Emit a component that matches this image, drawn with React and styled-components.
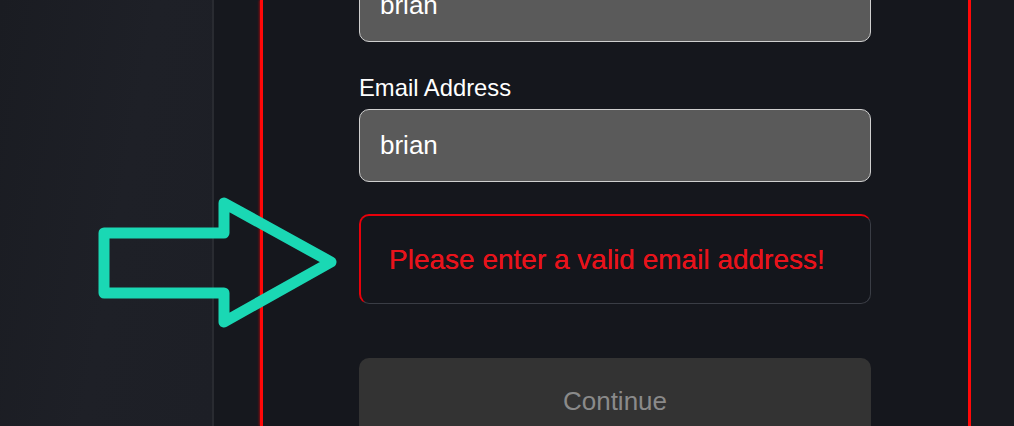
import React from "react";
import styled, { createGlobalStyle } from "styled-components";

const Global = createGlobalStyle`
  html, body { margin: 0; padding: 0; background: #16181e; overflow: hidden; }
  body { font-family: "Liberation Sans", Arial, sans-serif; }
  #root { height: 426px; }
`;

const Page = styled.div`
  position: relative;
  display: flex;
  height: 426px;
  width: 1014px;
  overflow: hidden;
  background: #16181e;
`;

const Sidebar = styled.aside`
  flex: 0 0 212px;
  border-right: 2px solid #292b31;
  background: linear-gradient(100deg, #1a1c22 0%, #1e2027 55%, #1d1f26 100%);
`;

const Gutter = styled.div`
  flex: 0 0 46px;
  background: #16181e;
`;

const Card = styled.section`
  flex: 0 0 711px;
  border-left: 3px solid #ff0808;
  border-right: 3px solid #ff0808;
  background: #15171d;
  padding: 0 97px 0 96px;
  box-sizing: border-box;
  box-shadow: -1px 0 2px rgba(255, 0, 0, 0.45), 1px 0 2px rgba(255, 0, 0, 0.45);
`;

const Rest = styled.div`
  flex: 1;
  background: #181a20;
`;

const Form = styled.form`
  display: flex;
  flex-direction: column;
  margin-top: -31px;
  width: 512px;
`;

const Field = styled.div`
  display: flex;
  align-items: center;
  box-sizing: border-box;
  height: 73px;
  padding: 0 20px;
  background: #5a5a5a;
  border: 1.5px solid #cfcfcf;
  border-radius: 10px;
  color: #ffffff;
  font-size: 26px;
  margin-bottom: ${(p) => p.$mb || 0}px;
`;

const Label = styled.label`
  color: #ffffff;
  font-size: 23.8px;
  line-height: 27px;
  margin-bottom: 8px;
`;

const ErrorBox = styled.div`
  display: flex;
  align-items: center;
  box-sizing: border-box;
  height: 90px;
  margin-top: 32px;
  padding: 0 20px 0 28px;
  border: 1.5px solid #3a3d45;
  border-top: 2px solid #e8000a;
  border-left: 2px solid #e8000a;
  border-radius: 10px;
  background: #14161c;
  color: #e8131b;
  font-size: 28px;
  text-shadow: 0 0 0.6px #e8131b;
`;

const Button = styled.button`
  margin-top: 54px;
  height: 86px;
  border: none;
  border-radius: 10px;
  background: #333333;
  color: #8a8a8a;
  font-family: "Liberation Sans", Arial, sans-serif;
  font-size: 26px;
  padding: 0;
`;

const ArrowMark = styled.svg`
  position: absolute;
  left: 0;
  top: 0;
  pointer-events: none;
`;

export default function App() {
  return (
    <>
      <Global />
      <Page>
        <Sidebar />
        <Gutter />
        <Card>
          <Form onSubmit={(e) => e.preventDefault()}>
            <Field $mb={32}>brian</Field>
            <Label>Email Address</Label>
            <Field>brian</Field>
            <ErrorBox>Please enter a valid email address!</ErrorBox>
            <Button type="button">Continue</Button>
          </Form>
        </Card>
        <Rest />
        <ArrowMark width="400" height="426" viewBox="0 0 400 426">
          <path
            d="M104 233 H224 V203 L331 262 L224 322 V293 H104 Z"
            fill="none"
            stroke="#1ad8b4"
            strokeWidth="11"
            strokeLinejoin="round"
          />
        </ArrowMark>
      </Page>
    </>
  );
}
